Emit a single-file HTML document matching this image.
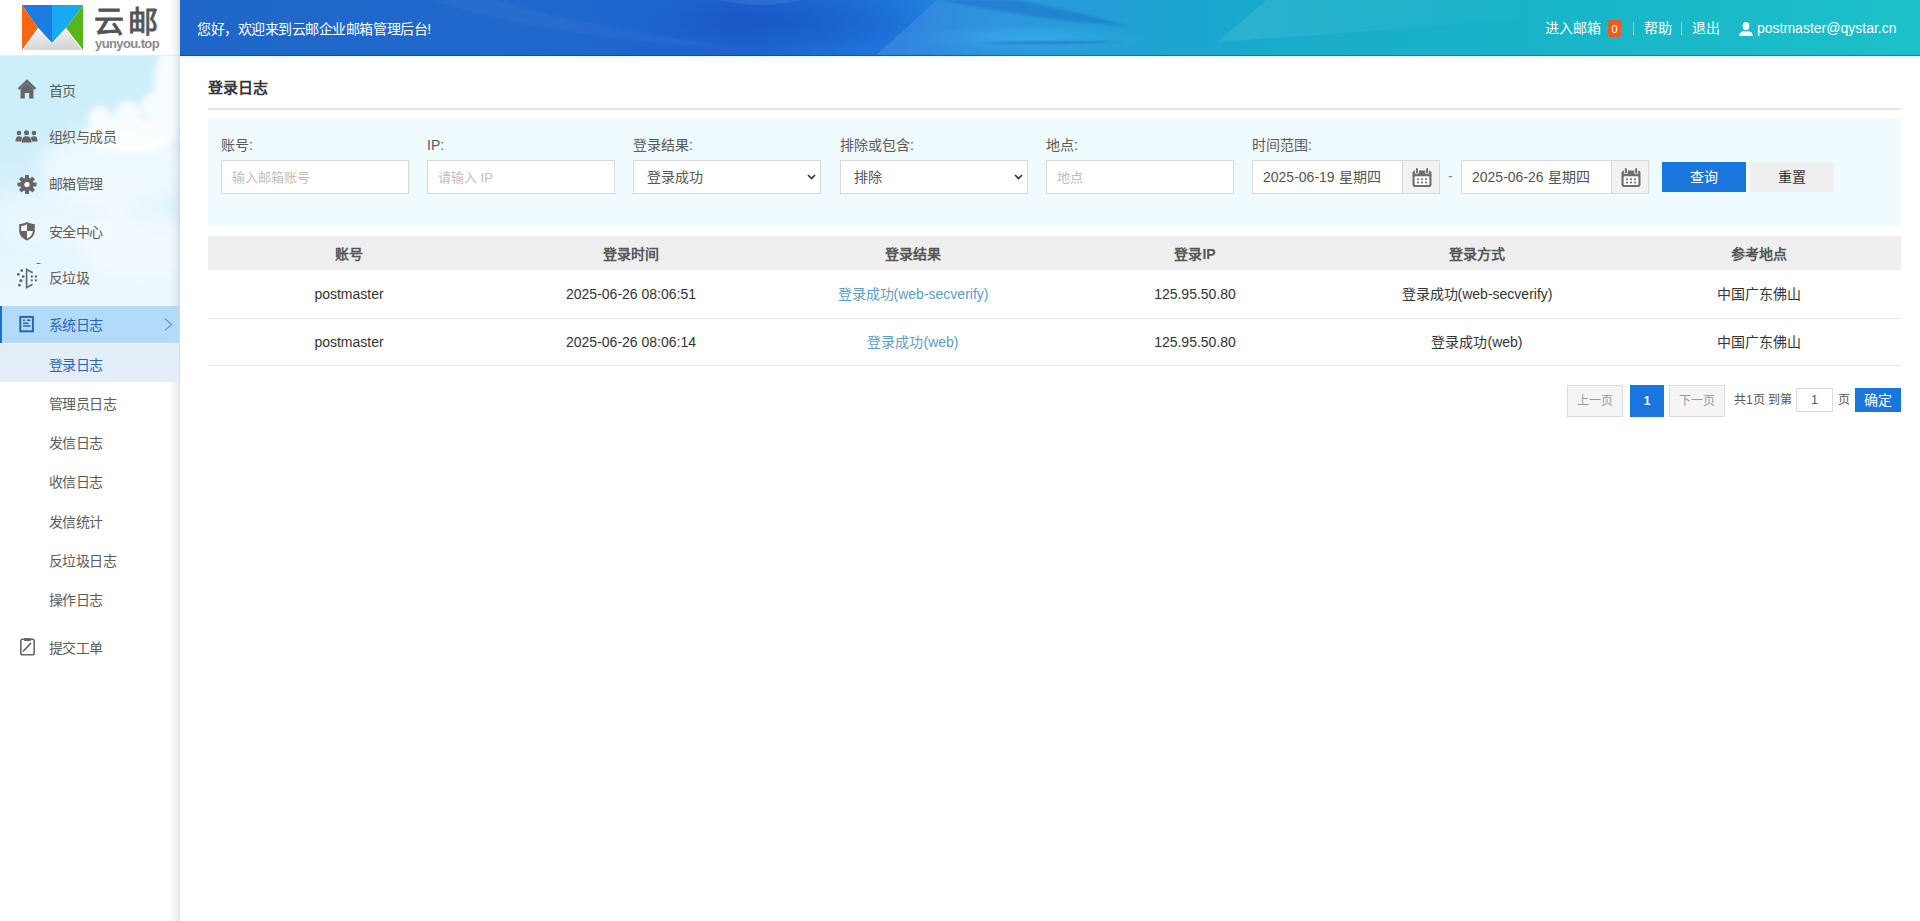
<!DOCTYPE html>
<html lang="zh-CN"><head><meta charset="utf-8">
<style>
*{margin:0;padding:0;box-sizing:border-box}
html,body{width:1920px;height:921px;overflow:hidden;background:#fff;font-family:"Liberation Sans",sans-serif;font-size:14px;color:#333}
.abs{position:absolute}
#logo{position:absolute;left:0;top:0;width:180px;height:56px;background:#fff;border-bottom:1px solid #e9eef0}
#header{position:absolute;left:180px;top:0;width:1740px;height:56px;overflow:hidden;border-bottom:1px solid rgba(0,30,80,0.35);
 background:linear-gradient(90deg,#1f66c8 0px,#2068cc 320px,#1d62d0 560px,#1e74dc 700px,#1f8fdc 820px,#1b9ed4 950px,#19abcb 1080px,#19b5c8 1400px,#1cc1c9 1740px)}
#sidebar{position:absolute;left:0;top:56px;width:180px;height:865px;overflow:hidden;background:#fff}
#sbshadow{position:absolute;left:170px;top:0;width:10px;height:921px;background:linear-gradient(90deg,rgba(200,205,215,0) 0%,rgba(200,205,215,0.25) 60%,rgba(190,195,205,0.42) 90%,rgba(180,185,195,0.5) 100%)}
.mi{position:absolute;left:0;width:180px;height:37px;color:#555;font-size:14px;line-height:37px}
.mi .t{position:absolute;left:49px;top:0}
.mi svg{position:absolute}
.sub{position:absolute;left:0;width:178px;height:39px;line-height:39px;color:#555}
.sub .t{position:absolute;left:49px}
#title{position:absolute;left:208px;top:78px;line-height:20px;font-size:15px;font-weight:bold;color:#333}
#divider{position:absolute;left:208px;top:108px;width:1693px;height:2px;background:#e6e6e6}
#filter{position:absolute;left:208px;top:119px;width:1693px;height:107px;background:#effbfe}
.lbl{position:absolute;top:135px;font-size:14px;line-height:20px;color:#5a5a5a}
.inp{position:absolute;top:160px;height:34px;width:188px;border:1px solid #d9d9d9;background:#fff;font-size:14px;line-height:32px;padding-left:10px;color:#c0c0c0}
.sel{color:#555;padding-left:13px}
.date{color:#555;padding-left:10px}
.addon{position:absolute;top:0;right:0;width:37px;height:32px;background:#f2f2f2;border-left:1px solid #d9d9d9}
.btn{position:absolute;top:162px;height:30px;width:84px;text-align:center;line-height:30px;font-size:14px}
#thead{position:absolute;left:208px;top:236px;width:1693px;height:34px;background:#efefef}
.th{position:absolute;top:1px;width:282px;text-align:center;line-height:34px;font-weight:bold;color:#555;font-size:14px}
.row{position:absolute;left:208px;width:1693px;height:48px;border-bottom:1px solid #ebebeb}
.td{position:absolute;top:1px;width:282px;text-align:center;line-height:46px;color:#333;font-size:14px}
.link{color:#5b9dc6}
.r2 .td{top:0}
.ph{font-size:13px;line-height:34px}
.mt{position:absolute;left:49px;font-size:14px;line-height:20px;color:#5c5c5c;white-space:nowrap;letter-spacing:-0.6px}
.pg{position:absolute;top:385px;height:32px;font-size:12px;line-height:30px;text-align:center}
</style></head><body>
<div id="logo">
 <svg class="abs" style="left:22px;top:5px" width="61" height="45" viewBox="0 0 61 45">
  <defs><linearGradient id="gg" x1="0" y1="0" x2="0.3" y2="1"><stop offset="0" stop-color="#f7f7f7"/><stop offset="1" stop-color="#d6d6d6"/></linearGradient></defs>
  <polygon points="0,45 16,23 30,38 44,23 61,45" fill="url(#gg)"/>
  <polygon points="0,0 30,0 30,38 16,23" fill="#1a7ddf"/>
  <polygon points="30,0 61,0 44,23 30,38" fill="#17a9f4"/>
  <polygon points="0,0 16,23 0,45" fill="#fc6610"/>
  <polygon points="61,0 61,45 44,23" fill="#58b51c"/>
  <path d="M1,44.5 L16.3,23.5 L30,38.6 L43.7,23.5 L60,44.5" stroke="#fff" stroke-width="0.9" fill="none" opacity="0.9"/>
 </svg>
 <div class="abs" style="left:93.5px;top:4px;font-size:30px;line-height:36px;color:#555;font-weight:normal;letter-spacing:4.5px;-webkit-text-stroke:0.9px #555">云邮</div>
 <div class="abs" style="left:95px;top:36px;font-size:13px;line-height:16px;color:#8a8a8a;font-weight:bold;letter-spacing:-0.6px">yunyou.top</div>
</div>
<div id="header">
 <svg class="abs" style="left:0;top:0" width="1740" height="55" viewBox="0 0 1740 55">
  <defs>
   <linearGradient id="lt" x1="695" y1="0" x2="1050" y2="0" gradientUnits="userSpaceOnUse"><stop offset="0" stop-color="#fff" stop-opacity="0.1"/><stop offset="1" stop-color="#fff" stop-opacity="0"/></linearGradient>
   <linearGradient id="lt2" x1="1037" y1="0" x2="1350" y2="0" gradientUnits="userSpaceOnUse"><stop offset="0" stop-color="#fff" stop-opacity="0.09"/><stop offset="1" stop-color="#fff" stop-opacity="0"/></linearGradient>
   <radialGradient id="dk"><stop offset="0" stop-color="#0a2896" stop-opacity="0.2"/><stop offset="0.6" stop-color="#0a2896" stop-opacity="0.1"/><stop offset="1" stop-color="#0a2896" stop-opacity="0"/></radialGradient>
   <radialGradient id="br"><stop offset="0" stop-color="#4fd0ff" stop-opacity="0.3"/><stop offset="1" stop-color="#4fd0ff" stop-opacity="0"/></radialGradient>
   <filter id="hb" x="-50%" y="-50%" width="200%" height="200%"><feGaussianBlur stdDeviation="8"/></filter>
   <filter id="hb1" x="-20%" y="-50%" width="140%" height="200%"><feGaussianBlur stdDeviation="0.8"/></filter>
  </defs>
  <ellipse cx="610" cy="22" rx="150" ry="30" fill="url(#dk)"/>
  <ellipse cx="580" cy="-17" rx="62" ry="22" fill="rgba(255,255,255,0.08)"/>
  <path d="M250,0 C330,25 420,40 560,48 C430,30 350,12 320,0Z" fill="rgba(255,255,255,0.035)" filter="url(#hb1)"/>
  <path d="M695,56 L757,0 L1050,0 L1050,56 Z" fill="url(#lt)"/>
  <path d="M761,0 C820,12 880,22 949,26 C920,18 880,8 837,0 Z" fill="rgba(20,60,175,0.22)" filter="url(#hb1)"/>
  <ellipse cx="850" cy="38" rx="120" ry="14" fill="url(#br)"/>
  <path d="M795,43 C850,41 900,41 945,42 C900,44 850,45 795,43Z" fill="rgba(10,60,160,0.35)" filter="url(#hb1)"/>
  <path d="M1037,42 L1087,0 L1350,0 L1350,18 C1250,26 1120,37 1037,42Z" fill="url(#lt2)"/>
 </svg>
 <div class="abs" style="left:17px;top:20px;color:#fff;font-size:14px;line-height:18px;letter-spacing:-0.46px">您好，欢迎来到云邮企业邮箱管理后台!</div>
 <div class="abs" style="left:1365px;top:19px;color:#fff;font-size:14px;line-height:18px">进入邮箱</div>
 <div class="abs" style="left:1428px;top:20px;width:13px;height:17px;background:#f05a22;border-radius:3px;color:#fff;font-size:11px;line-height:19px;text-align:center">0</div>
 <div class="abs" style="left:1453px;top:22px;width:1px;height:13px;background:rgba(255,255,255,0.4)"></div>
 <div class="abs" style="left:1464px;top:19px;color:#fff;font-size:14px;line-height:18px">帮助</div>
 <div class="abs" style="left:1501px;top:22px;width:1px;height:13px;background:rgba(255,255,255,0.4)"></div>
 <div class="abs" style="left:1512px;top:19px;color:#fff;font-size:14px;line-height:18px">退出</div>
 <svg class="abs" style="left:1559px;top:22px" width="14" height="14" viewBox="0 0 14 14"><ellipse cx="7" cy="4.2" rx="3.3" ry="4.1" fill="#fff"/><path d="M0.3,14 C0.3,10.8 2.2,9.6 4.8,8.9 C5.8,9.6 8.2,9.6 9.2,8.9 C11.8,9.6 13.7,10.8 13.7,14 Z" fill="#fff"/></svg>
 <div class="abs" style="left:1577px;top:19px;color:#fff;font-size:14px;line-height:18px">postmaster@qystar.cn</div>
</div>
<div id="sidebar"><svg width="180" height="320" viewBox="0 0 180 320" style="position:absolute;left:0;top:0">
 <defs>
  <linearGradient id="sky" x1="0" y1="0" x2="0" y2="1">
   <stop offset="0" stop-color="#cdeffc"/><stop offset="0.25" stop-color="#cdeefb"/><stop offset="0.5" stop-color="#ddf3fc"/><stop offset="0.7" stop-color="#e9f7fd"/><stop offset="0.9" stop-color="#f2fafe"/><stop offset="1" stop-color="#f8fcfe"/>
  </linearGradient>
  <filter id="bl" x="-50%" y="-50%" width="200%" height="200%"><feGaussianBlur stdDeviation="3"/></filter>
  <filter id="bl2" x="-50%" y="-50%" width="200%" height="200%"><feGaussianBlur stdDeviation="9"/></filter>
 </defs>
 <rect width="180" height="320" fill="url(#sky)"/>
 <g filter="url(#bl2)" fill="#fff">
  <ellipse cx="120" cy="110" rx="80" ry="40" opacity="0.6"/>
  <ellipse cx="60" cy="160" rx="70" ry="30" opacity="0.35"/>
  <ellipse cx="140" cy="190" rx="60" ry="35" opacity="0.5"/>
 </g>
 <g filter="url(#bl)" fill="#fff" opacity="0.85">
  <ellipse cx="172" cy="35" rx="18" ry="50"/>
  <circle cx="155" cy="50" r="14"/>
  <circle cx="128" cy="58" r="13"/>
  <circle cx="100" cy="62" r="12"/>
  <ellipse cx="130" cy="80" rx="45" ry="18"/>
 </g>
</svg></div>
<div class="abs" style="left:180px;top:56px;width:1740px;height:3px;background:linear-gradient(180deg,#dcf8ff,rgba(240,252,255,0.5) 60%,rgba(255,255,255,0))"></div>
<div id="sbshadow"></div>
<div class="abs" style="left:0;top:306px;width:179px;height:37px;background:#b2dbfa"></div>
<div class="abs" style="left:0;top:306px;width:2px;height:37px;background:#1a6fd0"></div>
<div class="abs" style="left:0;top:344px;width:179px;height:38px;background:#e3eef8"></div>
<div class="mt" style="top:81px">首页</div>
<div class="mt" style="top:127px">组织与成员</div>
<div class="mt" style="top:174px">邮箱管理</div>
<div class="mt" style="top:222px">安全中心</div>
<div class="mt" style="top:268px">反垃圾</div>
<div class="mt" style="top:315px;color:#2a66b8">系统日志</div>
<div class="mt" style="top:355px;color:#2a66b8">登录日志</div>
<div class="mt" style="top:394px">管理员日志</div>
<div class="mt" style="top:433px">发信日志</div>
<div class="mt" style="top:472px">收信日志</div>
<div class="mt" style="top:512px">发信统计</div>
<div class="mt" style="top:551px">反垃圾日志</div>
<div class="mt" style="top:590px">操作日志</div>
<div class="mt" style="top:638px">提交工单</div>
<!-- icons -->
<svg class="abs" style="left:17px;top:79px" width="20" height="20" viewBox="0 0 20 20"><path d="M1.5,10 L10,2 L18.5,10" stroke="#666" stroke-width="2.4" fill="none"/><path d="M3.5,9.5 L10,3.8 L16.5,9.5 V19.5 H12.2 V14 H7.8 V19.5 H3.5 Z" fill="#666"/></svg>
<svg class="abs" style="left:15px;top:130px" width="23" height="13" viewBox="0 0 23 13"><g fill="#666"><circle cx="4" cy="3" r="2.3"/><circle cx="11.5" cy="2.8" r="2.5"/><circle cx="19" cy="3" r="2.3"/><path d="M0.5,11.5 C0.5,7.5 2,6.2 4,6.2 C6,6.2 7,7 7,8 L6,11.5Z"/><path d="M22.5,11.5 C22.5,7.5 21,6.2 19,6.2 C17,6.2 16,7 16,8 L17,11.5Z"/><path d="M6.5,12.5 C6.5,8 8.5,6.3 11.5,6.3 C14.5,6.3 16.5,8 16.5,12.5Z"/></g></svg>
<svg class="abs" style="left:17px;top:175px" width="20" height="19" viewBox="-10 -9.5 20 19"><g fill="#666"><circle r="6.8"/><g id="teeth"><rect x="-2" y="-9.5" width="4" height="4" rx="0.8"/><rect x="-2" y="5.5" width="4" height="4" rx="0.8"/><rect x="-9.5" y="-2" width="4" height="4" rx="0.8"/><rect x="5.5" y="-2" width="4" height="4" rx="0.8"/></g><use href="#teeth" transform="rotate(45)"/></g><circle r="2.6" fill="#fff"/></svg>
<svg class="abs" style="left:18px;top:221px" width="18" height="20" viewBox="0 0 18 20"><path d="M9,1 C6,2.5 3.5,3 1.2,3 V9.5 C1.2,14.5 4.5,17.5 9,19.5 C13.5,17.5 16.8,14.5 16.8,9.5 V3 C14.5,3 12,2.5 9,1Z" fill="#666"/><path d="M9,3.3 C6.8,4.3 4.9,4.8 3.2,4.9 V10 H9Z" fill="#fff"/><path d="M9,10 H14.8 C14.6,13.8 12.3,16 9,17.5Z" fill="#fff"/></svg>
<svg class="abs" style="left:16px;top:262px" width="26" height="28" viewBox="16 262 26 28"><g fill="#666"><circle cx="21.7" cy="270.6" r="1.4"/><circle cx="18.3" cy="274.3" r="1.4"/><circle cx="23.2" cy="276.6" r="1.4"/><circle cx="20.9" cy="280.6" r="1.6"/><circle cx="19.4" cy="285.2" r="1.35"/><circle cx="31.8" cy="276.5" r="1.15"/><circle cx="35.9" cy="276.5" r="1.15"/><circle cx="31.8" cy="280.3" r="1.15"/><circle cx="35.9" cy="280.3" r="1.15"/><rect x="36.5" y="263" width="4" height="1" fill="#777"/></g><path d="M32.6,272.8 L26.6,269.3 V287.6 L32.6,284.3" stroke="#666" stroke-width="1.6" fill="none" stroke-linejoin="miter"/></svg>
<svg class="abs" style="left:19px;top:315px" width="16" height="18" viewBox="0 0 16 18"><rect x="1.3" y="1.9" width="12.6" height="14.4" stroke="#2a63b0" stroke-width="2" fill="none"/><path d="M4,5.3 H6 M7.8,5.3 H11.5 M4,8.2 H9.5 M4,11 H11.5" stroke="#2a63b0" stroke-width="1.4" fill="none"/></svg>
<svg class="abs" style="left:164px;top:318px" width="9" height="13" viewBox="0 0 9 13"><path d="M1,0.7 L7.6,6.5 L1,12.3" stroke="#7696b8" stroke-width="1.3" fill="none"/></svg>
<svg class="abs" style="left:19px;top:637px" width="17" height="19" viewBox="0 0 17 19"><rect x="1.8" y="2.3" width="13.4" height="15.5" rx="1.8" stroke="#666" stroke-width="1.6" fill="none"/><rect x="5" y="1" width="7" height="3" rx="0.8" fill="#666"/><path d="M4.5,14 L11.5,6.5" stroke="#666" stroke-width="1.8" fill="none" stroke-linecap="round"/></svg>

<div id="title">登录日志</div>
<div id="divider"></div>
<div id="filter"></div>
<div class="lbl" style="left:221px">账号:</div>
<div class="lbl" style="left:427px">IP:</div>
<div class="lbl" style="left:633px">登录结果:</div>
<div class="lbl" style="left:840px">排除或包含:</div>
<div class="lbl" style="left:1046px">地点:</div>
<div class="lbl" style="left:1252px">时间范围:</div>
<div class="inp ph" style="left:221px">输入邮箱账号</div>
<div class="inp ph" style="left:427px">请输入 IP</div>
<div class="inp sel" style="left:633px">登录成功<svg class="abs" style="right:4px;top:13px" width="9" height="6" viewBox="0 0 9 6"><path d="M1,1 L4.5,4.5 L8,1" stroke="#333" stroke-width="1.6" fill="none"/></svg></div>
<div class="inp sel" style="left:840px">排除<svg class="abs" style="right:4px;top:13px" width="9" height="6" viewBox="0 0 9 6"><path d="M1,1 L4.5,4.5 L8,1" stroke="#333" stroke-width="1.6" fill="none"/></svg></div>
<div class="inp ph" style="left:1046px">地点</div>
<div class="inp date" style="left:1252px">2025-06-19 星期四<div class="addon"><svg class="abs" style="left:9px;top:7px" width="20" height="20" viewBox="0 0 20 20"><rect x="0.5" y="2.5" width="19" height="16.5" rx="2.8" fill="#6e6e6e"/><rect x="2.6" y="8.3" width="14.8" height="8.6" rx="0.6" fill="#fbfbfb"/><g fill="#6e6e6e"><circle cx="6" cy="11.2" r="1.05"/><circle cx="10" cy="11.2" r="1.05"/><circle cx="14" cy="11.2" r="1.05"/><circle cx="6" cy="14.5" r="1.05"/><circle cx="10" cy="14.5" r="1.05"/><circle cx="14" cy="14.5" r="1.05"/></g><rect x="2.9" y="-0.5" width="4" height="6.8" rx="1.8" fill="#f2f2f2"/><rect x="13.1" y="-0.5" width="4" height="6.8" rx="1.8" fill="#f2f2f2"/><rect x="3.9" y="0" width="2" height="5.5" rx="1" fill="#6e6e6e"/><rect x="14.1" y="0" width="2" height="5.5" rx="1" fill="#6e6e6e"/></svg></div></div>
<div class="abs" style="left:1448px;top:168px;color:#888;font-size:14px">-</div>
<div class="inp date" style="left:1461px">2025-06-26 星期四<div class="addon"><svg class="abs" style="left:9px;top:7px" width="20" height="20" viewBox="0 0 20 20"><rect x="0.5" y="2.5" width="19" height="16.5" rx="2.8" fill="#6e6e6e"/><rect x="2.6" y="8.3" width="14.8" height="8.6" rx="0.6" fill="#fbfbfb"/><g fill="#6e6e6e"><circle cx="6" cy="11.2" r="1.05"/><circle cx="10" cy="11.2" r="1.05"/><circle cx="14" cy="11.2" r="1.05"/><circle cx="6" cy="14.5" r="1.05"/><circle cx="10" cy="14.5" r="1.05"/><circle cx="14" cy="14.5" r="1.05"/></g><rect x="2.9" y="-0.5" width="4" height="6.8" rx="1.8" fill="#f2f2f2"/><rect x="13.1" y="-0.5" width="4" height="6.8" rx="1.8" fill="#f2f2f2"/><rect x="3.9" y="0" width="2" height="5.5" rx="1" fill="#6e6e6e"/><rect x="14.1" y="0" width="2" height="5.5" rx="1" fill="#6e6e6e"/></svg></div></div>
<div class="btn" style="left:1662px;background:#1a76dc;color:#fff">查询</div>
<div class="btn" style="left:1750px;background:#efefef;color:#333">重置</div>

<div id="thead">
 <div class="th" style="left:0">账号</div>
 <div class="th" style="left:282px">登录时间</div>
 <div class="th" style="left:564px">登录结果</div>
 <div class="th" style="left:846px">登录IP</div>
 <div class="th" style="left:1128px">登录方式</div>
 <div class="th" style="left:1410px">参考地点</div>
</div>
<div class="row" style="top:270px;height:49px">
 <div class="td" style="left:0">postmaster</div>
 <div class="td" style="left:282px">2025-06-26 08:06:51</div>
 <div class="td link" style="left:564px">登录成功(web-secverify)</div>
 <div class="td" style="left:846px">125.95.50.80</div>
 <div class="td" style="left:1128px">登录成功(web-secverify)</div>
 <div class="td" style="left:1410px">中国广东佛山</div>
</div>
<div class="row r2" style="top:319px;height:47px">
 <div class="td" style="left:0">postmaster</div>
 <div class="td" style="left:282px">2025-06-26 08:06:14</div>
 <div class="td link" style="left:564px">登录成功(web)</div>
 <div class="td" style="left:846px">125.95.50.80</div>
 <div class="td" style="left:1128px">登录成功(web)</div>
 <div class="td" style="left:1410px">中国广东佛山</div>
</div>
<div class="pg" style="left:1567px;width:56px;border:1px solid #dcdcdc;background:#f5f5f5;color:#999">上一页</div>
<div class="pg" style="left:1630px;width:34px;background:#1a76dc;color:#fff;font-weight:bold;line-height:32px">1</div>
<div class="pg" style="left:1669px;width:56px;border:1px solid #dcdcdc;background:#f5f5f5;color:#999">下一页</div>
<div class="abs" style="left:1734px;top:392px;font-size:12px;line-height:16px;color:#555">共1页 到第</div>
<div class="abs" style="left:1796px;top:388px;width:37px;height:24px;border:1px solid #dcdcdc;background:#fff;font-size:12px;line-height:22px;text-align:center;color:#555">1</div>
<div class="abs" style="left:1838px;top:392px;font-size:12px;line-height:16px;color:#555">页</div>
<div class="abs" style="left:1855px;top:388px;width:46px;height:24px;background:#1a76dc;color:#fff;font-size:14px;line-height:24px;text-align:center">确定</div>
</body></html>
